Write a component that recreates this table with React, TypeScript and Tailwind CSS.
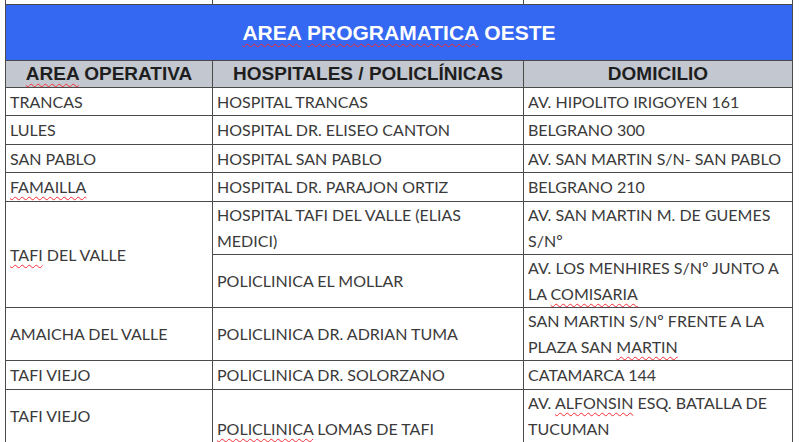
import React from "react";

const sq = "underline decoration-wavy decoration-red-500 decoration-1 underline-offset-[3px]";

const cell = "border-[1.5px] border-[#4a4a4a] px-[4px] text-left align-middle leading-[26px]";

export default function App() {
  return (
    <div className="w-[800px] h-[442px] overflow-hidden bg-white" style={{ fontFamily: "Lato, 'Open Sans', sans-serif" }}>
      <div className="pl-[5px] pr-[8px] -mt-[20px]">
        <table className="w-[787px] border-collapse table-fixed text-[16px] text-[#3a3a3a]">
          <colgroup>
            <col className="w-[207px]" />
            <col className="w-[311px]" />
            <col className="w-[269px]" />
          </colgroup>
          <tbody>
            <tr className="h-[24px]">
              <td className={cell}></td>
              <td className={cell}></td>
              <td className={cell}></td>
            </tr>
            <tr className="h-[56px]">
              <td colSpan={3} className="border-[1.5px] border-[#4a4a4a] bg-[#3467f2] text-center text-white font-bold text-[21px]" style={{ fontFamily: "'Liberation Sans', Arial, sans-serif" }}>
                <span className={sq}>AREA</span> <span className={sq}>PROGRAMATICA</span> OESTE
              </td>
            </tr>
            <tr className="h-[27px] bg-[#c3c8d0] text-[#1e1e1e] font-bold text-[19px]" style={{ fontFamily: "'Liberation Sans', Arial, sans-serif" }}>
              <td className="border-[1.5px] border-[#4a4a4a] text-center leading-[24px]"><span className={sq}>AREA</span> OPERATIVA</td>
              <td className="border-[1.5px] border-[#4a4a4a] text-center leading-[24px]">HOSPITALES / POLICLÍNICAS</td>
              <td className="border-[1.5px] border-[#4a4a4a] text-center leading-[24px]">DOMICILIO</td>
            </tr>
            <tr className="h-[28px]">
              <td className={cell}>TRANCAS</td>
              <td className={cell}>HOSPITAL TRANCAS</td>
              <td className={cell}>AV. HIPOLITO IRIGOYEN 161</td>
            </tr>
            <tr className="h-[29px]">
              <td className={cell}>LULES</td>
              <td className={cell}>HOSPITAL DR. ELISEO CANTON</td>
              <td className={cell}>BELGRANO 300</td>
            </tr>
            <tr className="h-[28px]">
              <td className={cell}>SAN PABLO</td>
              <td className={cell}>HOSPITAL SAN PABLO</td>
              <td className={`${cell} whitespace-nowrap`}>AV. SAN MARTIN S/N- SAN PABLO</td>
            </tr>
            <tr className="h-[29px]">
              <td className={cell}><span className={sq}>FAMAILLA</span></td>
              <td className={cell}>HOSPITAL DR. PARAJON ORTIZ</td>
              <td className={cell}>BELGRANO 210</td>
            </tr>
            <tr className="h-[52px]">
              <td rowSpan={2} className={cell}><span className={sq}>TAFI</span> DEL VALLE</td>
              <td className={cell}>HOSPITAL TAFI DEL VALLE (ELIAS<br />MEDICI)</td>
              <td className={cell}>AV. SAN MARTIN M. DE GUEMES<br />S/Nº</td>
            </tr>
            <tr className="h-[53px]">
              <td className={cell}>POLICLINICA EL MOLLAR</td>
              <td className={cell}>AV. LOS MENHIRES S/Nº JUNTO A<br />LA <span className={sq}>COMISARIA</span></td>
            </tr>
            <tr className="h-[53px]">
              <td className={cell}>AMAICHA DEL VALLE</td>
              <td className={cell}>POLICLINICA DR. ADRIAN TUMA</td>
              <td className={cell}>SAN MARTIN S/Nº FRENTE A LA<br />PLAZA SAN <span className={sq}>MARTIN</span></td>
            </tr>
            <tr className="h-[29px]">
              <td className={cell}>TAFI VIEJO</td>
              <td className={cell}>POLICLINICA DR. SOLORZANO</td>
              <td className={cell}>CATAMARCA 144</td>
            </tr>
            <tr className="h-[60px]">
              <td className={`${cell} align-top pt-[13px]`}>TAFI VIEJO</td>
              <td className={`${cell} align-top pt-[26px]`}><span className={sq}>POLICLINICA</span> LOMAS DE TAFI</td>
              <td className={`${cell} align-top`}>AV. <span className={sq}>ALFONSIN</span> ESQ. BATALLA DE<br />TUCUMAN</td>
            </tr>
          </tbody>
        </table>
      </div>
    </div>
  );
}
